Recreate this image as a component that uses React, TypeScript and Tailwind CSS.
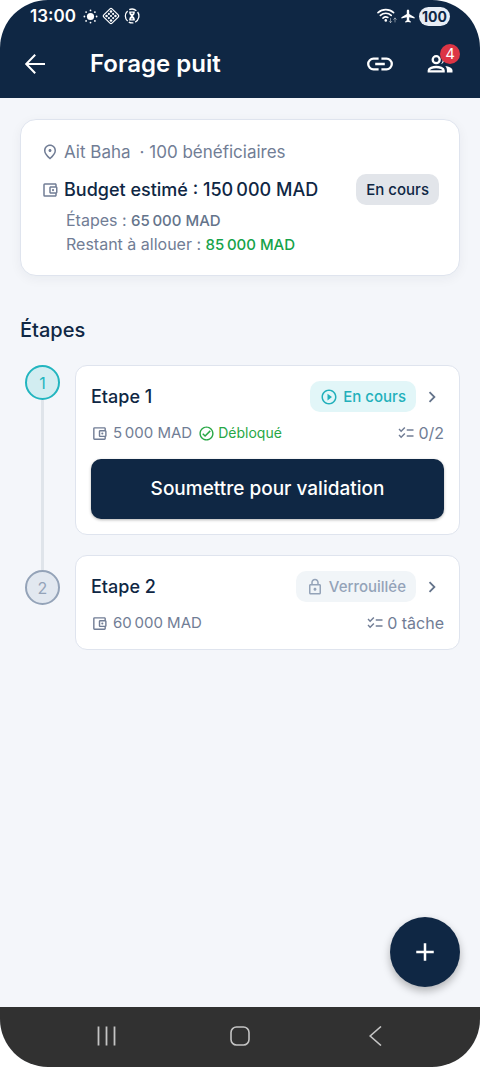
import type { ReactNode } from "react";
import {
  MdAdd,
  MdChecklist,
  MdChevronRight,
  MdOutlineAccountBalanceWallet,
  MdOutlineCheckCircle,
  MdOutlineLock,
  MdOutlinePlace,
  MdPlayCircleOutline,
} from "react-icons/md";

function StatusBar() {
  return (
    <div className="flex h-8 items-center justify-between px-[30px]">
      <div className="flex items-center gap-1">
        <span className="mr-[3px] text-[17px] leading-6 font-semibold">13:00</span>
        <svg width="15" height="15" viewBox="0 0 15 15" fill="currentColor" aria-hidden="true">
          <circle cx="7.5" cy="7.5" r="3.6" />
          <circle cx="7.5" cy="1.4" r="0.9" />
          <circle cx="7.5" cy="13.6" r="0.9" />
          <circle cx="1.4" cy="7.5" r="0.9" />
          <circle cx="13.6" cy="7.5" r="0.9" />
          <circle cx="3.1" cy="3.1" r="0.9" />
          <circle cx="11.9" cy="3.1" r="0.9" />
          <circle cx="3.1" cy="11.9" r="0.9" />
          <circle cx="11.9" cy="11.9" r="0.9" />
        </svg>
        <svg width="18" height="18" viewBox="0 0 17 17" fill="none" stroke="currentColor" aria-hidden="true">
          <rect x="3" y="3" width="11" height="11" rx="1.4" strokeWidth="1.1" transform="rotate(45 8.5 8.5)" />
          <g fill="currentColor" stroke="none">
            <circle cx="8.5" cy="4.3" r="1.2" />
            <circle cx="8.5" cy="12.7" r="1.2" />
            <circle cx="4.3" cy="8.5" r="1.2" />
            <circle cx="12.7" cy="8.5" r="1.2" />
            <circle cx="6.5" cy="6.5" r="1" />
            <circle cx="10.5" cy="10.5" r="1" />
            <circle cx="10.5" cy="6.5" r="1" />
            <circle cx="6.5" cy="10.5" r="1" />
            <circle cx="8.5" cy="8.5" r="1" />
          </g>
        </svg>
        <svg width="16" height="16" viewBox="0 0 16 16" fill="none" stroke="currentColor" aria-hidden="true">
          <path d="M3.6 2.9a6.9 6.9 0 0 0 0 10.2M5.2 1.7a6.9 6.9 0 0 1 7.2 1M13.6 4a6.9 6.9 0 0 1-2.4 10.1M4.8 14.1a6.9 6.9 0 0 0 4.6.7" strokeWidth="1.3" />
          <path d="M5.2 3.6h5.6v1.2l-.5 1.6L8.9 8l1.4 1.6.5 1.6v1.2H5.2v-1.2l.5-1.6L7.1 8 5.7 6.4l-.5-1.6z" fill="currentColor" stroke="none" />
          <path d="M6.9 5.2h2.2M7.2 10.9h1.6" stroke="#0f2744" strokeWidth="0.9" />
        </svg>
      </div>
      <div className="flex items-center gap-1">
        <svg width="20" height="16" viewBox="0 0 20 16" fill="none" stroke="currentColor" strokeLinecap="round" aria-hidden="true">
          <path d="M1 4.6a11.6 11.6 0 0 1 15.6 0M3.4 7.4a7.8 7.8 0 0 1 10.8 0M6 10.1a4.2 4.2 0 0 1 4.8-.6" strokeWidth="1.6" />
          <circle cx="8.8" cy="12.4" r="1.3" fill="currentColor" stroke="none" />
          <path d="M13.5 10.5v4M12.2 13.3l1.3 1.4 1.3-1.4M18 14v-4M16.7 11.4l1.3-1.4 1.3 1.4" strokeWidth="0.9" opacity="0.5" />
        </svg>
        <svg width="14" height="14" viewBox="0 0 14 14" fill="currentColor" aria-hidden="true">
          <path d="M7 .4c-.8 0-1.2.8-1.2 1.7v2.8L.4 8.2v1.4l5.4-1.3v2.9l-1.6 1.3v1.1L7 13l2.8.6v-1.1l-1.6-1.3V8.3l5.4 1.3V8.2L8.2 4.9V2.1C8.2 1.2 7.8.4 7 .4z" />
        </svg>
        <span className="rounded-full bg-[#e8edf5] px-[3px] text-[14px] leading-[19px] font-bold text-[#0f2744]">100</span>
      </div>
    </div>
  );
}

function TopBar() {
  return (
    <header className="bg-[#0f2744] pb-1 text-white">
      <StatusBar />
      <div className="flex h-[62px] items-center pt-px pr-5">
        <button type="button" aria-label="Retour" className="flex h-10 w-[70px] items-center justify-center">
          <svg width="22" height="22" viewBox="0 0 22 22" fill="none" stroke="currentColor" strokeWidth="2" aria-hidden="true">
            <path d="M21 11H2.5M11.2 1.8 2.2 11l9 9.2" />
          </svg>
        </button>
        <h1 className="flex-1 pl-5 text-[24px] leading-8 font-semibold">Forage puit</h1>
        <div className="flex gap-5">
          <button type="button" aria-label="Copier le lien" className="flex size-10 items-center justify-center">
            <svg width="26" height="14" viewBox="0 0 26 14" fill="none" stroke="currentColor" strokeWidth="2.3" aria-hidden="true">
              <path d="M11.6 1.7H6.5a5.3 5.3 0 0 0 0 10.6h5.1M14.4 1.7h5.1a5.3 5.3 0 0 1 0 10.6h-5.1M8.2 7h9.6" />
            </svg>
          </button>
          <button type="button" aria-label="Membres" className="relative flex size-10 items-center justify-center">
            <svg width="26" height="20" viewBox="0 0 26 20" fill="none" stroke="currentColor" strokeWidth="2.3" aria-hidden="true">
              <circle cx="9.2" cy="5.7" r="3.5" />
              <path d="M1.8 17.3v-1c0-2 4-3.3 7.4-3.3s7.4 1.3 7.4 3.3v1z" />
              <path d="M14 10.1a4.7 4.7 0 0 0 0-8.8 6.2 6.2 0 0 1 0 8.8zM18.3 12.1c3.6.6 7.2 2 7.2 4.2v2.2h-5.6v-2.2c0-1.8-.5-3-1.6-4.2z" fill="currentColor" stroke="none" />
            </svg>
            <span className="absolute top-0 right-0 flex size-5 items-center justify-center rounded-full bg-[#dc3545] text-[15px] leading-none">4</span>
          </button>
        </div>
      </div>
    </header>
  );
}

function ProjectSummary() {
  return (
    <section className="rounded-2xl border border-[#dfe4ee] bg-white px-5 pt-5 pb-[18px] shadow-[0_3px_12px_rgba(15,39,68,0.05)]">
      <p className="flex h-6 items-center gap-[5px] text-[17px] leading-6 text-[#717d95]">
        <MdOutlinePlace size={18} aria-hidden="true" />
        <span>Ait Baha</span>
        <span className="ml-1">· 100 bénéficiaires</span>
      </p>
      <div className="mt-[10px] flex items-center justify-between">
        <p className="flex items-center gap-[5px] text-[18px] leading-6 font-medium text-[#0f2744]">
          <MdOutlineAccountBalanceWallet size={18} className="text-[#717d95]" aria-hidden="true" />
          <span>{"Budget estimé : 150\u202f000 MAD"}</span>
        </p>
        <span className="rounded-[10px] bg-[#e2e5ea] px-[10px] text-[15px] leading-[31px] font-medium text-[#0f2744]">En cours</span>
      </div>
      <div className="mt-[3px] mb-px pl-[25px] text-[16px] leading-6 text-[#717d95]">
        <p className="h-6">
          Étapes : <span className="text-[15px] font-medium text-[#64748b]">{"65\u202f000 MAD"}</span>
        </p>
        <p className="h-6">
          Restant à allouer : <span className="text-[15px] font-medium text-[#16a34a]">{"85\u202f000 MAD"}</span>
        </p>
      </div>
    </section>
  );
}

function StepMarker({ label, active }: { label: string; active?: boolean }) {
  const tone = active
    ? "border-[#22b5bf] bg-[#d2edf1] text-[#22b5bf]"
    : "border-[#94a3b8] bg-[#e2e8f0] text-[#94a3b8]";
  return (
    <span className={`flex size-[35px] shrink-0 items-center justify-center rounded-full border-2 text-[16px] leading-none ${tone}`}>
      {label}
    </span>
  );
}

type StepCardProps = {
  title: string;
  status: ReactNode;
  statusTone: string;
  amount: string;
  unlocked?: boolean;
  tasks: string;
  children?: ReactNode;
};

function StepCard({ title, status, statusTone, amount, unlocked, tasks, children }: StepCardProps) {
  return (
    <article className="min-w-0 flex-1 rounded-xl border border-[#dfe4ee] bg-white p-[15px]">
      <div className="flex items-center">
        <h3 className="flex-1 text-[18px] leading-6 font-medium text-[#0f2744]">{title}</h3>
        <span className={`flex h-[31px] items-center gap-[5px] rounded-[10px] px-[10px] text-[15px] leading-6 font-medium ${statusTone}`}>
          {status}
        </span>
        <button type="button" aria-label={`Ouvrir ${title}`} className="ml-1 flex size-6 items-center justify-center text-[#64748b]">
          <MdChevronRight size={22} />
        </button>
      </div>
      <div className="mt-[10px] flex h-[22px] items-center text-[16px] leading-[22px] text-[#717d95]">
        <MdOutlineAccountBalanceWallet size={17} className="mr-[5px]" aria-hidden="true" />
        <span className="text-[15px]">{amount}</span>
        {unlocked && (
          <span className="ml-[6px] flex items-center gap-[3px] text-[14px] text-[#28a745]">
            <MdOutlineCheckCircle size={17} aria-hidden="true" />
            Débloqué
          </span>
        )}
        <span className="ml-auto flex items-center gap-[3px]">
          <MdChecklist size={18} aria-hidden="true" />
          {tasks}
        </span>
      </div>
      {children}
    </article>
  );
}

function Steps() {
  return (
    <section className="mt-10">
      <h2 className="text-[20px] leading-7 font-medium text-[#0f2744]">Étapes</h2>
      <ol className="mt-[21px] pl-[5px]">
        <li className="flex gap-[15px]">
          <div className="flex flex-col items-center">
            <StepMarker label="1" active />
            <span className="w-[3px] flex-1 bg-[#dfe4ea]" />
          </div>
          <div className="flex flex-1 pb-5">
            <StepCard
              title="Etape 1"
              status={
                <>
                  <MdPlayCircleOutline size={18} aria-hidden="true" />
                  En cours
                </>
              }
              statusTone="bg-[#e2f6f8] text-[#22b0bb]"
              amount={"5\u202f000 MAD"}
              unlocked
              tasks="0/2"
            >
              <button
                type="button"
                className="mt-[15px] h-[60px] w-full rounded-[10px] bg-[#0f2744] text-[19px] font-medium text-white shadow-[0_1px_3px_rgba(0,0,0,0.3)]"
              >
                Soumettre pour validation
              </button>
            </StepCard>
          </div>
        </li>
        <li className="flex gap-[15px]">
          <div className="flex flex-col items-center">
            <span className="h-[15px] w-[3px] bg-[#dfe4ea]" />
            <StepMarker label="2" />
          </div>
          <StepCard
            title="Etape 2"
            status={
              <>
                <MdOutlineLock size={18} aria-hidden="true" />
                Verrouillée
              </>
            }
            statusTone="bg-[#f1f5f8] text-[#94a3b8]"
            amount={"60\u202f000 MAD"}
            tasks="0 tâche"
          />
        </li>
      </ol>
    </section>
  );
}

function SystemNav() {
  return (
    <nav aria-label="Navigation système" className="flex h-[60px] items-center justify-between bg-[#313131] px-[87px] pb-[2px] text-[#c4c4c4]">
      <button type="button" aria-label="Applications récentes" className="flex size-10 items-center justify-center">
        <svg width="20" height="20" viewBox="0 0 20 20" fill="none" stroke="currentColor" strokeWidth="1.8">
          <path d="M1.5 .5v19M9.5 .5v19M17.5 .5v19" />
        </svg>
      </button>
      <button type="button" aria-label="Accueil" className="flex size-10 items-center justify-center">
        <svg width="20" height="20" viewBox="0 0 20 20" fill="none" stroke="currentColor" strokeWidth="1.6">
          <rect x="1" y="1" width="18" height="18" rx="5.5" />
        </svg>
      </button>
      <button type="button" aria-label="Précédent" className="flex size-10 items-center justify-center">
        <svg width="20" height="20" viewBox="0 0 20 20" fill="none" stroke="currentColor" strokeWidth="1.6">
          <path d="M18 .5 7.2 10 18 19.5" />
        </svg>
      </button>
    </nav>
  );
}

export default function App() {
  return (
    <div className="min-h-screen bg-white font-['Inter',sans-serif]">
      <div className="flex min-h-screen flex-col overflow-hidden rounded-[48px] bg-[#f4f6fa]">
        <TopBar />
        <main className="relative flex-1 px-5 pt-[21px] pb-[110px]">
          <ProjectSummary />
          <Steps />
          <button
            type="button"
            aria-label="Ajouter une étape"
            className="absolute right-5 bottom-5 flex size-[70px] items-center justify-center rounded-full bg-[#0f2744] text-white shadow-[0_4px_9px_rgba(0,0,0,0.28)]"
          >
            <MdAdd size={30} />
          </button>
        </main>
        <SystemNav />
      </div>
    </div>
  );
}
